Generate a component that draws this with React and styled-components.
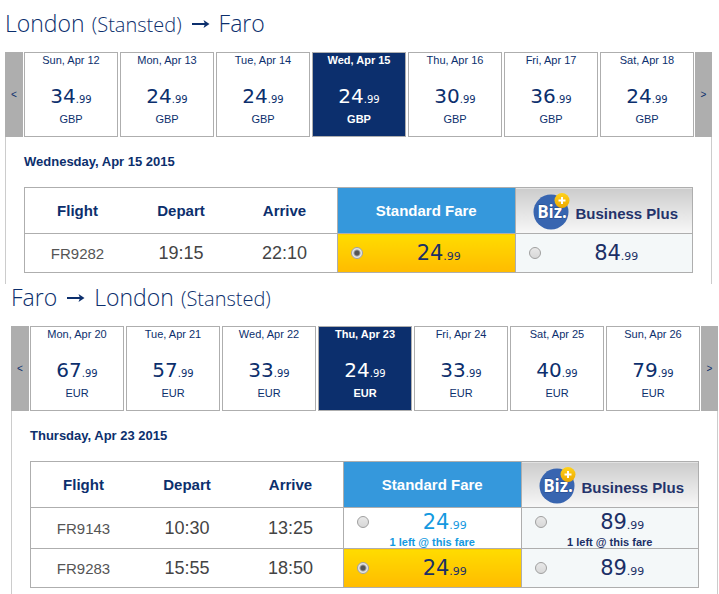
import { useState } from 'react';
import styled, { createGlobalStyle } from 'styled-components';

const GlobalStyle = createGlobalStyle`
    body{
        margin: 0;
        background: white;
        color: #0c2f6d;
        font-family: "Liberation Sans", Arial, sans-serif;
    }
`

const Page = styled.main`
    padding-top: 10px;
`

const Section = styled.section`
    margin-left: ${(props) => (props.$inset ? 11 : 5)}px;
    margin-right: ${(props) => (props.$inset ? 1 : 7)}px;
`

const Route = styled.h1`
    display: flex;
    align-items: baseline;
    gap: 9px;
    height: 42px;
    margin: 0;
    font-family: "Open Sans", "Noto Sans", sans-serif;
    font-size: 23px;
    font-weight: 300;
    line-height: 26px;

    small{
        margin-left: 2px;
        font-size: 20px;
        line-height: 1;
    }
`

const Strip = styled.div`
    display: flex;
    gap: 1px;
    height: 85px;
`

const Days = styled.div`
    display: flex;
    flex: 1;
    gap: 2px;
`

const Nav = styled.button`
    width: ${(props) => (props.$end ? 17 : 18)}px;
    padding: 0;
    border: 0;
    background: #aeaeae;
    color: #0c2f6d;
    font-family: inherit;
    font-size: 10px;
    cursor: pointer;
`

const Day = styled.button`
    display: flex;
    flex: 1;
    flex-direction: column;
    align-items: center;
    min-width: 0;
    padding: 0;
    border: 1px solid #aeaeae;
    background: ${(props) => (props.$active ? '#0c2f6d' : 'white')};
    color: ${(props) => (props.$active ? 'white' : '#0c2f6d')};
    font-family: inherit;
    font-size: 11px;
    font-weight: ${(props) => (props.$active ? 'bold' : 'normal')};
    line-height: 14px;
    cursor: pointer;
`

const Amount = styled.span`
    font-family: "DejaVu Sans", Verdana, sans-serif;
    font-size: 21px;
    font-weight: normal;
    line-height: 28px;

    small{
        font-size: 11px;
        line-height: 1;
    }
`

const DayAmount = styled(Amount)`
    margin: 15px 0 2px;
    font-size: 20px;

    small{
        font-size: 10px;
    }
`

const Panel = styled.div`
    padding: 17px 18px 11px;
    border: solid #cccccc;
    border-width: 0 1px;
`

const Heading = styled.h2`
    margin: 0 0 18px;
    font-size: 13px;
    line-height: 15px;
`

const Table = styled.table`
    width: 100%;
    table-layout: fixed;
    border-collapse: collapse;
    border: 1px solid #aeaeae;
    text-align: center;

    th, td{
        padding: 0;
        border-bottom: 1px solid #aeaeae;
    }
`

const Head = styled.th`
    width: ${(props) => props.$width};
    height: 45px;
    font-size: 15px;
`

const StandardHead = styled(Head)`
    border-left: 1px solid #aeaeae;
    background: #3598dc;
    color: white;
`

const PlusHead = styled(Head)`
    border-left: 1px solid #aeaeae;
    background: linear-gradient(#cccccc, #f8f8f8);
    color: #24336b;
`

const PlusTitle = styled.div`
    display: flex;
    align-items: center;
    justify-content: center;
    gap: 4px;
    padding-left: 4px;

    span{
        padding-top: 6px;
    }
`

const FlightNo = styled.td`
    color: #555555;
    font-size: 15px;
`

const Time = styled.td`
    color: #444444;
    font-size: 18px;
    line-height: 20px;
`

const fareColors = {
    standard: 'white',
    plus: '#f4f8f9',
    selected: 'linear-gradient(#ffdc00, #ffbb00)',
}

const FareCell = styled.td`
    height: ${(props) => (props.$tall ? 40 : 38)}px;
    border-left: 1px solid #aeaeae;
    background: ${(props) => fareColors[props.$kind]};
    color: ${(props) => (props.$low ? '#1499e0' : '#1b2f66')};
`

const FareLabel = styled.label`
    display: block;
    cursor: pointer;
`

const FareLine = styled.span`
    display: flex;
    align-items: center;
    padding-left: 13px;
`

const FareAmount = styled(Amount)`
    flex: 1;
`

const Note = styled.span`
    display: block;
    font-size: 11px;
    font-weight: bold;
    line-height: 12px;
`

const Radio = styled.input`
    appearance: none;
    width: 12px;
    height: 12px;
    margin: 0;
    border: 1px solid #a0a0a0;
    border-radius: 50%;
    background: linear-gradient(#e8e8e8, #d8d8d8);

    &:checked{
        background: radial-gradient(circle, #555555 0 2px, #e6e6e6 4px);
    }
`

const outbound = {
    currency: 'GBP',
    title: 'Wednesday, Apr 15 2015',
    days: [
        { date: 'Sun, Apr 12', price: 34 },
        { date: 'Mon, Apr 13', price: 24 },
        { date: 'Tue, Apr 14', price: 24 },
        { date: 'Wed, Apr 15', price: 24 },
        { date: 'Thu, Apr 16', price: 30 },
        { date: 'Fri, Apr 17', price: 36 },
        { date: 'Sat, Apr 18', price: 24 },
    ],
    flights: [
        { id: 'FR9282', depart: '19:15', arrive: '22:10', standard: 24, plus: 84 },
    ],
}

const inbound = {
    currency: 'EUR',
    title: 'Thursday, Apr 23 2015',
    days: [
        { date: 'Mon, Apr 20', price: 67 },
        { date: 'Tue, Apr 21', price: 57 },
        { date: 'Wed, Apr 22', price: 33 },
        { date: 'Thu, Apr 23', price: 24 },
        { date: 'Fri, Apr 24', price: 33 },
        { date: 'Sat, Apr 25', price: 40 },
        { date: 'Sun, Apr 26', price: 79 },
    ],
    flights: [
        { id: 'FR9143', depart: '10:30', arrive: '13:25', standard: 24, plus: 89, note: '1 left @ this fare' },
        { id: 'FR9283', depart: '15:55', arrive: '18:50', standard: 24, plus: 89 },
    ],
}

const RouteArrow = () => (
    <svg width="19" height="14" viewBox="0 0 19 14" role="img" aria-label="to">
        <path d="M1 6h13" stroke="#0c2f6d" strokeWidth="2" />
        <path d="M12.5 2l6 4l-6 4l1.5-4z" fill="#0c2f6d" />
    </svg>
)

const BizLogo = () => (
    <svg width="38" height="38" viewBox="0 0 38 38" aria-hidden="true">
        <defs>
            <linearGradient id="plusFill" x1="0" y1="0" x2="0" y2="1">
                <stop offset="0" stopColor="#ffd21c" />
                <stop offset="1" stopColor="#eda800" />
            </linearGradient>
        </defs>
        <circle cx="18" cy="20" r="17.5" fill="#3865b0" />
        <text x="19" y="26" textAnchor="middle" fill="white" stroke="#22468a" strokeWidth="1" paintOrder="stroke" fontFamily='"Open Sans", sans-serif' fontSize="17" fontWeight="bold">Biz.</text>
        <circle cx="29" cy="8.5" r="7.5" fill="url(#plusFill)" />
        <path d="M29 5v7M25.5 8.5h7" stroke="white" strokeWidth="2" />
    </svg>
)

const Fare = ({ flight, kind, group, selected, onSelect }) => {
    const value = `${flight.id}-${kind}`
    const checked = selected === value

    return (
        <FareCell $kind={checked ? 'selected' : kind} $tall={!!flight.note} $low={!!flight.note && kind === 'standard'}>
            <FareLabel>
                <FareLine>
                    <Radio type="radio" name={group} value={value} checked={checked} onChange={() => onSelect(value)} />
                    <FareAmount>{flight[kind]}<small>.99</small></FareAmount>
                </FareLine>
                {flight.note ? <Note>{flight.note}</Note> : undefined}
            </FareLabel>
        </FareCell>
    )
}

const Journey = ({ data, children, inset, initial }) => {
    const [day, setDay] = useState(3);
    const [fare, setFare] = useState(initial);

    const move = (step) => {
        setDay(Math.min(data.days.length - 1, Math.max(0, day + step)))
    }

    return (
        <Section $inset={inset}>
            <Route>{children}</Route>
            <Strip>
                <Nav type="button" onClick={() => move(-1)}>&lt;</Nav>
                <Days>
                    {data.days.map((el, index) => (
                        <Day type="button" key={el.date} $active={index === day} onClick={() => setDay(index)}>
                            <span>{el.date}</span>
                            <DayAmount>{el.price}<small>.99</small></DayAmount>
                            <span>{data.currency}</span>
                        </Day>
                    ))}
                </Days>
                <Nav type="button" $end onClick={() => move(1)}>&gt;</Nav>
            </Strip>
            <Panel>
                <Heading>{data.title}</Heading>
                <Table>
                    <thead>
                        <tr>
                            <Head $width="105px">Flight</Head>
                            <Head $width="102px">Depart</Head>
                            <Head $width="105px">Arrive</Head>
                            <StandardHead>Standard Fare</StandardHead>
                            <PlusHead>
                                <PlusTitle>
                                    <BizLogo />
                                    <span>Business Plus</span>
                                </PlusTitle>
                            </PlusHead>
                        </tr>
                    </thead>
                    <tbody>
                        {data.flights.map((el) => (
                            <tr key={el.id}>
                                <FlightNo>{el.id}</FlightNo>
                                <Time>{el.depart}</Time>
                                <Time>{el.arrive}</Time>
                                <Fare flight={el} kind="standard" group={data.currency} selected={fare} onSelect={setFare} />
                                <Fare flight={el} kind="plus" group={data.currency} selected={fare} onSelect={setFare} />
                            </tr>
                        ))}
                    </tbody>
                </Table>
            </Panel>
        </Section>
    )
}

const App = () => {
    return (
        <>
        <GlobalStyle />
        <Page>
            <Journey data={outbound} initial="FR9282-standard">
                <span>London<small> (Stansted)</small></span>
                <RouteArrow />
                <span>Faro</span>
            </Journey>
            <Journey data={inbound} initial="FR9283-standard" inset>
                <span>Faro</span>
                <RouteArrow />
                <span>London<small> (Stansted)</small></span>
            </Journey>
        </Page>
        </>
    )
}

export default App;
